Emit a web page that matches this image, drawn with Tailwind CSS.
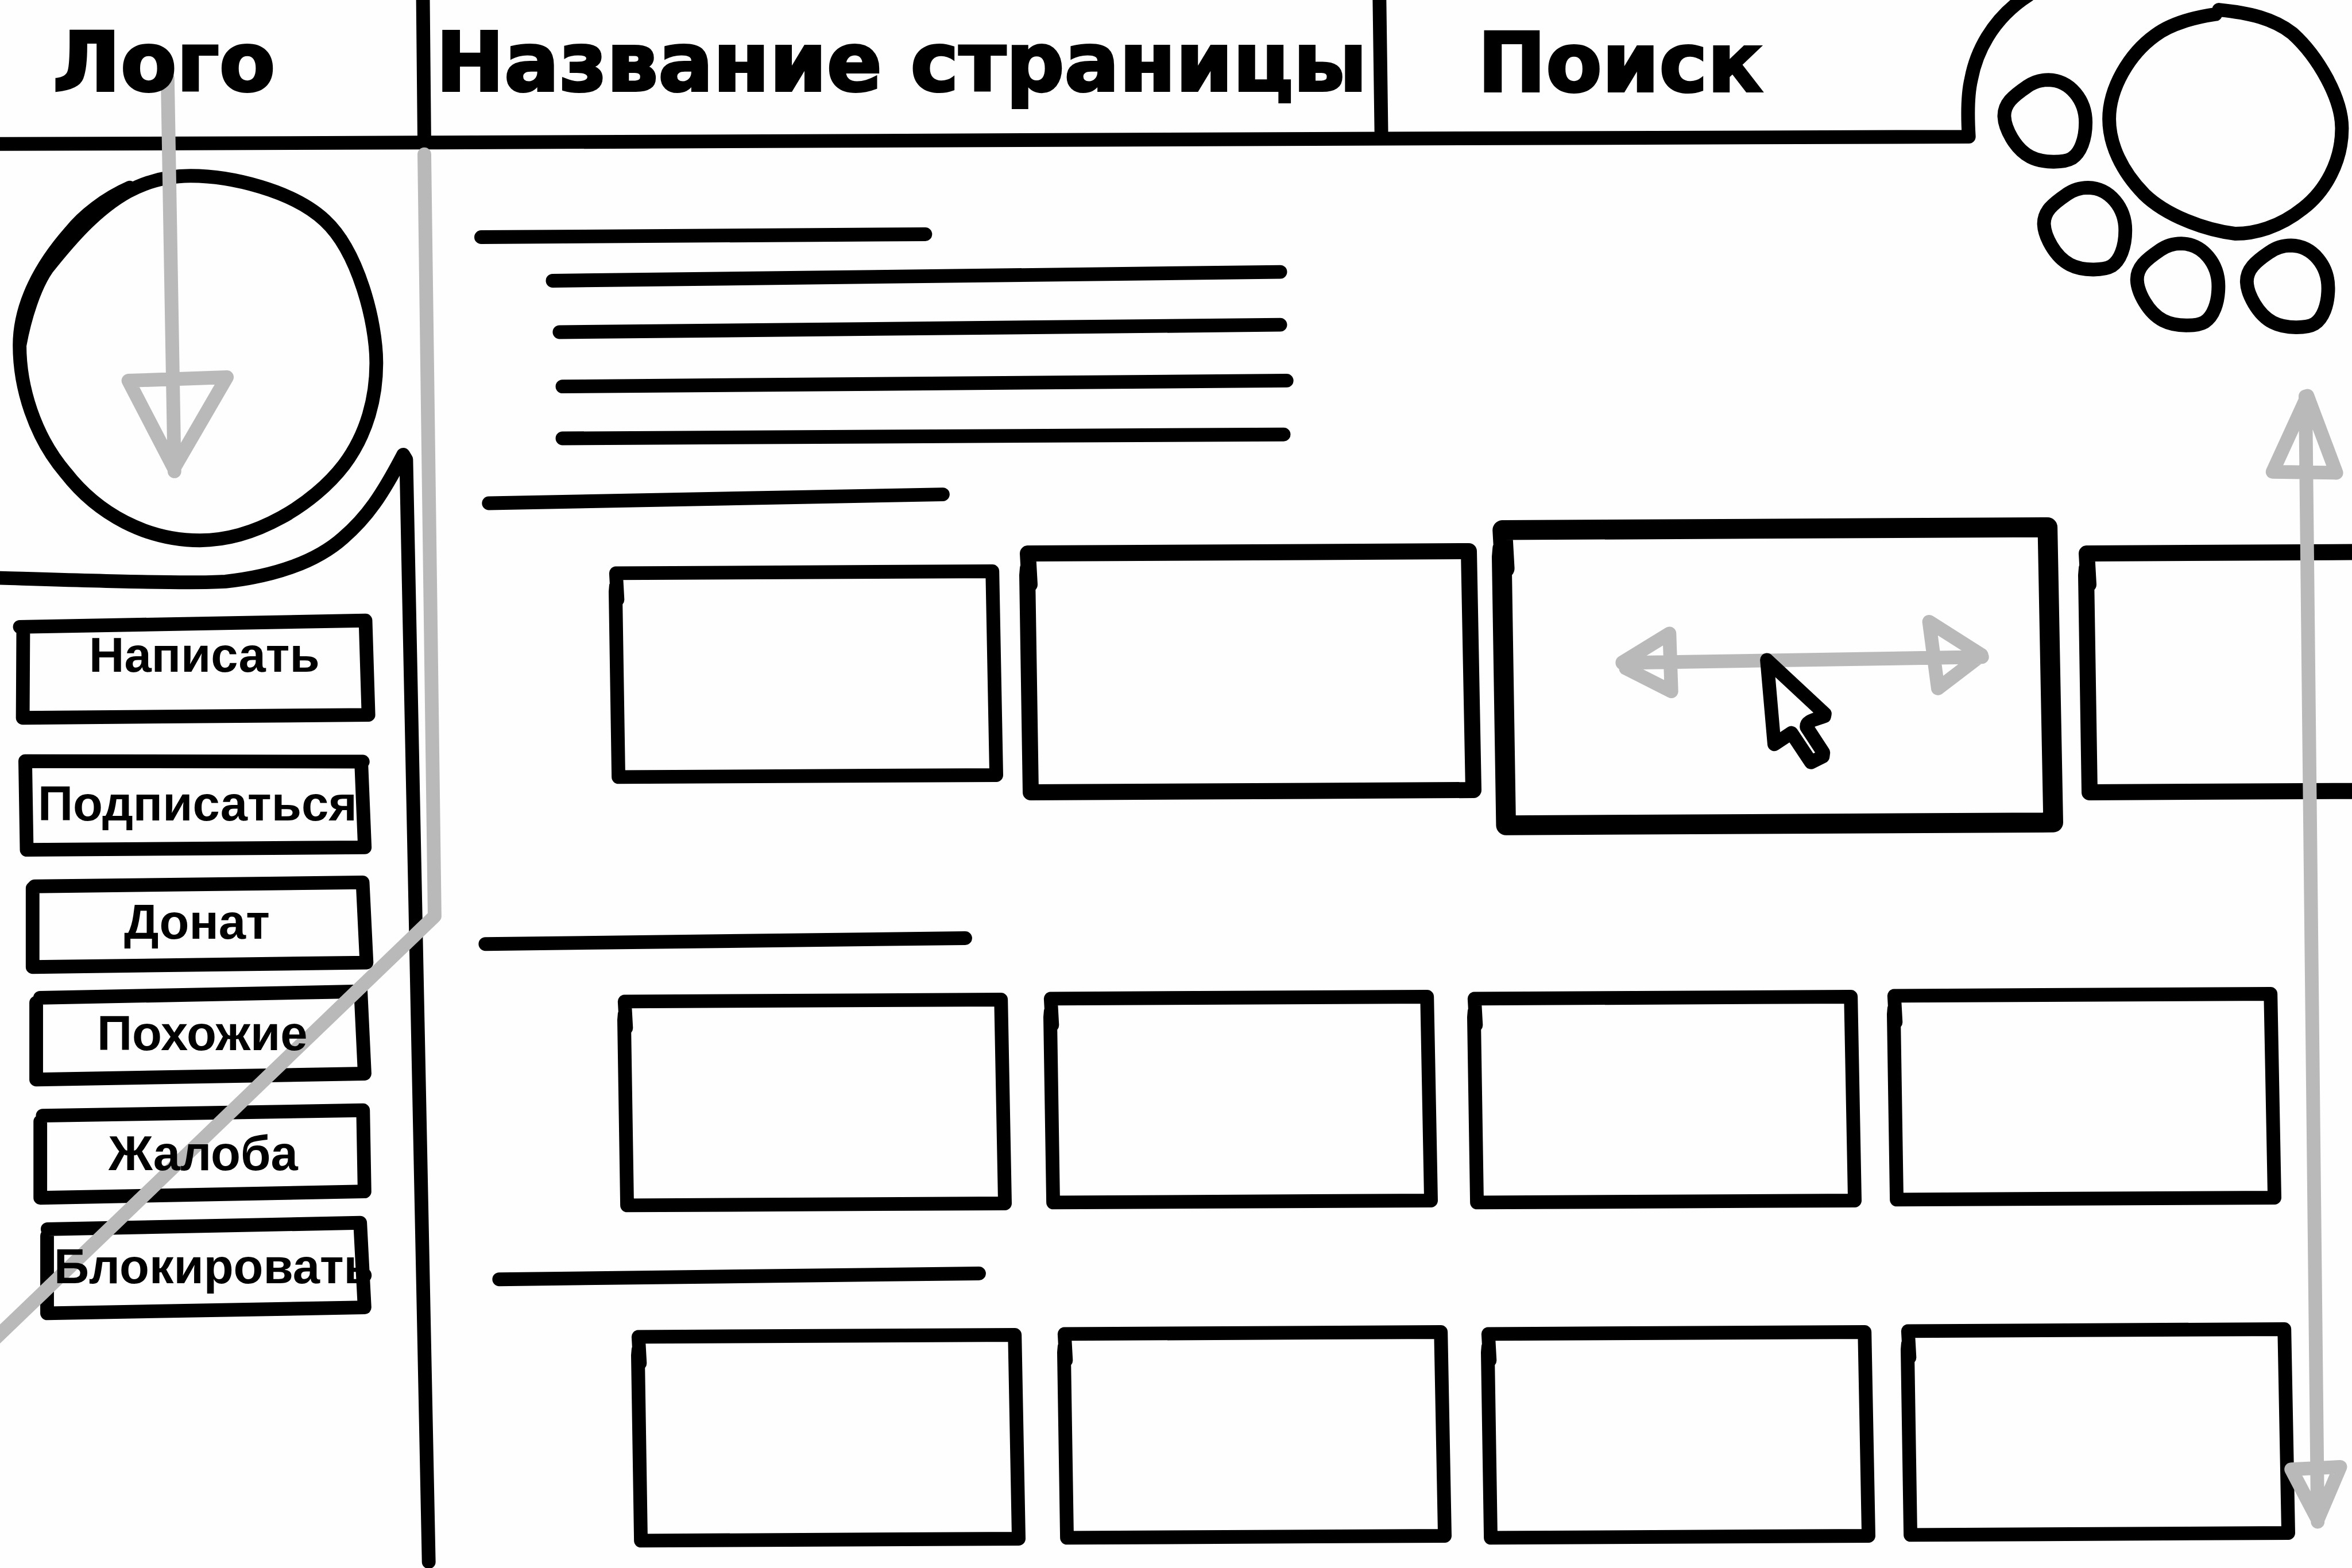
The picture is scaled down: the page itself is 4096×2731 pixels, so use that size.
<!DOCTYPE html>
<html lang="ru">
<head>
<meta charset="utf-8">
<meta name="viewport" content="width=device-width, initial-scale=1">
<title>Название страницы</title>
<script src="https://cdn.jsdelivr.net/npm/@tailwindcss/browser@4"></script>
</head>
<body class="bg-[#fefefe] text-black">

<!-- Shared hand-drawn card outline -->
<svg class="hidden" aria-hidden="true">
  <symbol id="card" viewBox="-15 -18 805 448" overflow="visible">
    <path d="M3 54L0 0L768 -4L776 412L5 416L-1 38L0 26" fill="none" stroke="#000" stroke-width="28" stroke-linecap="round" stroke-linejoin="round"/>
  </symbol>
</svg>

<div class="relative min-h-screen overflow-hidden">

  <!-- Page rules: header line, dividers, sidebar edge -->
  <svg class="pointer-events-none absolute left-0 top-0 h-auto w-full" viewBox="0 0 4800 3200" fill="none" stroke="#000" stroke-width="28" stroke-linecap="round" stroke-linejoin="round" aria-hidden="true">
    <path d="M-20 294L866 291L2819 283L4018 279C4015 230 4016 190 4023 161C4032 112 4062 40 4140 -10"/>
    <path d="M863 -20L866 290"/>
    <path d="M2815 -20L2819 268"/>
    <path d="M-20 1179C150 1184 380 1192 460 1187C560 1176 645 1147 700 1098C750 1055 780 1010 823 928L829 938L875 3188"/>
  </svg>

  <header class="flex h-[250px] items-start pt-[38px] font-['DejaVu_Sans',sans-serif] text-[142px] leading-none font-bold [-webkit-text-stroke:4px_black]">
    <a href="#" class="relative z-20 w-[18%] pl-[92px]">Лого</a>
    <h1 class="relative z-20 w-[44%] pl-[22px] whitespace-nowrap">Название страницы</h1>
    <input type="search" placeholder="Поиск" aria-label="Поиск" class="relative z-20 h-[142px] w-[20%] bg-transparent pl-[34px] leading-none outline-none placeholder:text-black placeholder:opacity-100">
    <!-- Profile menu: one large and four small bubbles -->
    <svg class="absolute top-0 right-0 h-auto w-[16%]" viewBox="4032 0 768 700" fill="none" stroke="#000" stroke-width="28" stroke-linecap="round" stroke-linejoin="round" role="img" aria-label="Меню профиля">
      <path d="M4528 20C4590 26 4640 38 4678 68C4730 115 4779 200 4779 262C4779 330 4745 390 4700 425C4650 465 4600 477 4562 477C4500 470 4420 440 4375 396C4330 350 4304 295 4304 243C4304 180 4345 110 4398 72C4430 48 4480 35 4521 29"/>
      <path id="bubble" d="M4136 177C4150 167 4165 163 4180 163C4225 164 4256 205 4256 250C4256 285 4245 312 4228 323C4213 332 4170 334 4143 320C4112 304 4091 262 4090 238C4089 212 4108 196 4136 177Z"/>
      <use href="#bubble" x="81" y="220"/>
      <use href="#bubble" x="271" y="334"/>
      <use href="#bubble" x="495" y="338"/>
    </svg>
  </header>

  <div class="flex items-start">
    <aside class="w-[18%] shrink-0 font-['Liberation_Sans',Arial,sans-serif] text-[85px] leading-none font-bold">
      <!-- Avatar -->
      <svg class="block h-auto w-full" viewBox="0 293 864 907" fill="none" stroke="#000" stroke-width="28" stroke-linecap="round" stroke-linejoin="round" role="img" aria-label="Аватар">
        <path d="M265 383C215 405 170 440 143 474C85 540 40 620 40 705C40 790 70 890 134 965C200 1050 300 1103 408 1103C520 1103 640 1030 702 949C750 885 768 810 768 741C768 655 730 512 663 450C596 388 470 359 389 359C340 359 300 370 261 391C200 425 150 480 96 548C70 585 50 650 40 705"/>
      </svg>

      <nav class="mt-11 flex flex-col items-start whitespace-nowrap" aria-label="Действия">
        <button type="button" class="relative ml-[22px] flex h-[195px] w-[633px] items-start pt-[30px] pl-[133px] text-left">
          <svg class="absolute inset-0 size-full overflow-visible" viewBox="26 1251 742 229" fill="none" stroke="#000" stroke-width="28" stroke-linecap="round" stroke-linejoin="round" aria-hidden="true"><path d="M40 1279L747 1266L753 1459L46 1465L47 1279"/></svg>
          <span class="relative z-20">Написать</span>
        </button>
        <button type="button" class="relative mt-[49px] ml-8 flex h-[181px] w-[616px] items-start pt-[45px] pl-[34px] text-left">
          <svg class="absolute inset-0 size-full overflow-visible" viewBox="38 1538 722 212" fill="none" stroke="#000" stroke-width="28" stroke-linecap="round" stroke-linejoin="round" aria-hidden="true"><path d="M741 1555L52 1554L55 1735L745 1730L738 1560"/></svg>
          <span class="relative z-20">Подписаться</span>
        </button>
        <button type="button" class="relative mt-8 ml-11 flex h-[172px] w-[608px] items-start pt-[38px] pl-[172px] text-left">
          <svg class="absolute inset-0 size-full overflow-visible" viewBox="52 1787 712 202" fill="none" stroke="#000" stroke-width="28" stroke-linecap="round" stroke-linejoin="round" aria-hidden="true"><path d="M70 1809L741 1801L749 1965L66 1974L66 1813Z"/></svg>
          <span class="relative z-20">Донат</span>
        </button>
        <button type="button" class="relative mt-[17px] ml-[50px] flex h-[179px] w-[598px] items-start pt-[43px] pl-[119px] text-left">
          <svg class="absolute inset-0 size-full overflow-visible" viewBox="59 2009 701 210" fill="none" stroke="#000" stroke-width="28" stroke-linecap="round" stroke-linejoin="round" aria-hidden="true"><path d="M82 2037L737 2024L745 2192L74 2204L74 2047"/></svg>
          <span class="relative z-20">Похожие</span>
        </button>
        <button type="button" class="relative mt-7 ml-[57px] flex h-[178px] w-[591px] items-start pt-[45px] pl-[132px] text-left">
          <svg class="absolute inset-0 size-full overflow-visible" viewBox="67 2251 693 209" fill="none" stroke="#000" stroke-width="28" stroke-linecap="round" stroke-linejoin="round" aria-hidden="true"><path d="M87 2277L742 2266L745 2432L82 2445L82 2289"/></svg>
          <span class="relative z-20">Жалоба</span>
        </button>
        <button type="button" class="relative mt-[18px] ml-[68px] flex h-[184px] w-[580px] items-start pt-[46px] pl-[26px] text-left">
          <svg class="absolute inset-0 size-full overflow-visible" viewBox="80 2481 680 216" fill="none" stroke="#000" stroke-width="28" stroke-linecap="round" stroke-linejoin="round" aria-hidden="true"><path d="M97 2509L736 2496L745 2669L96 2681L96 2523"/></svg>
          <span class="relative z-20">Блокировать</span>
        </button>
      </nav>
    </aside>

    <main class="min-w-0 flex-1 pt-[146px]">
      <!-- Description: heading and four lines -->
      <svg class="ml-[89px] block h-auto w-[42.5%]" viewBox="968 464 1674 440" overflow="visible" stroke="#000" stroke-width="28" stroke-linecap="round" role="img" aria-label="Описание">
        <path d="M982 484L1889 478M1128 573L2614 555M1142 678L2614 663M1148 789L2627 777M1148 895L2621 887"/>
      </svg>

      <section class="mt-[79px]">
        <svg class="ml-[103px] block h-auto w-[814px]" viewBox="0 0 954 46" stroke="#000" stroke-width="28" stroke-linecap="round" overflow="visible" aria-hidden="true"><path d="M13 31L940 13"/></svg>
        <div class="mt-3 flex items-start pl-[323px]">
          <svg class="mt-[82px] h-auto w-[687px] shrink-0 overflow-visible" viewBox="0 0 805 448" aria-hidden="true"><use href="#card" width="805" height="448"/></svg>
          <svg class="mt-[45px] ml-7 h-auto w-[805px] shrink-0 overflow-visible" viewBox="0 0 805 448" aria-hidden="true"><use href="#card" width="805" height="448"/></svg>
          <svg class="ml-[18px] h-auto w-[995px] shrink-0 overflow-visible" viewBox="0 0 805 448" aria-hidden="true"><use href="#card" width="805" height="448"/></svg>
          <svg class="mt-[45px] ml-[26px] h-auto w-[805px] shrink-0 overflow-visible" viewBox="0 0 805 448" aria-hidden="true"><use href="#card" width="805" height="448"/></svg>
        </div>
      </section>

      <section class="mt-[167px]">
        <svg class="ml-[98px] block h-auto w-[858px]" viewBox="0 0 1005 40" stroke="#000" stroke-width="28" stroke-linecap="round" overflow="visible" aria-hidden="true"><path d="M12 26L991 14"/></svg>
        <div class="mt-[63px] flex items-start pl-[338px]">
          <svg class="mt-[10px] h-auto w-[687px] shrink-0 overflow-visible" viewBox="0 0 805 448" aria-hidden="true"><use href="#card" width="805" height="448"/></svg>
          <svg class="mt-[5px] ml-[55px] h-auto w-[687px] shrink-0 overflow-visible" viewBox="0 0 805 448" aria-hidden="true"><use href="#card" width="805" height="448"/></svg>
          <svg class="mt-[5px] ml-[51px] h-auto w-[687px] shrink-0 overflow-visible" viewBox="0 0 805 448" aria-hidden="true"><use href="#card" width="805" height="448"/></svg>
          <svg class="ml-[44px] h-auto w-[687px] shrink-0 overflow-visible" viewBox="0 0 805 448" aria-hidden="true"><use href="#card" width="805" height="448"/></svg>
        </div>
      </section>

      <section class="mt-[94px]">
        <svg class="ml-[122px] block h-auto w-[858px]" viewBox="0 0 1005 40" stroke="#000" stroke-width="28" stroke-linecap="round" overflow="visible" aria-hidden="true"><path d="M12 26L991 14"/></svg>
        <div class="mt-[63px] flex items-start pl-[362px]">
          <svg class="mt-[10px] h-auto w-[687px] shrink-0 overflow-visible" viewBox="0 0 805 448" aria-hidden="true"><use href="#card" width="805" height="448"/></svg>
          <svg class="mt-[5px] ml-[55px] h-auto w-[687px] shrink-0 overflow-visible" viewBox="0 0 805 448" aria-hidden="true"><use href="#card" width="805" height="448"/></svg>
          <svg class="mt-[5px] ml-[51px] h-auto w-[687px] shrink-0 overflow-visible" viewBox="0 0 805 448" aria-hidden="true"><use href="#card" width="805" height="448"/></svg>
          <svg class="ml-[44px] h-auto w-[687px] shrink-0 overflow-visible" viewBox="0 0 805 448" aria-hidden="true"><use href="#card" width="805" height="448"/></svg>
        </div>
      </section>
    </main>
  </div>

  <!-- Motion annotations and cursor, drawn over the wireframe -->
  <svg class="pointer-events-none absolute left-0 top-0 z-10 h-auto w-full" viewBox="0 0 4800 3200" fill="none" stroke="#b9b9b9" stroke-width="28" stroke-linecap="round" stroke-linejoin="round" aria-hidden="true">
    <path d="M342 160L356 962M262 777L463 770L355 956Z"/>
    <path d="M866 315L887 1870L-20 2742"/>
    <path d="M4705 809L4730 3106M4709 808L4638 963L4768 965ZM4676 2999L4776 2994L4730 3102Z"/>
    <path d="M3311 1353L4045 1341M3311 1352L3407 1293L3411 1411L3318 1364M3937 1269L3955 1405L4044 1337Z"/>
    <path stroke="#000" d="M3606 1347L3724 1457L3723 1462C3700 1470 3686 1472 3687 1484L3721 1536L3720 1544L3696 1556L3656 1496L3621 1519Z"/>
  </svg>
</div>
</body>
</html>
